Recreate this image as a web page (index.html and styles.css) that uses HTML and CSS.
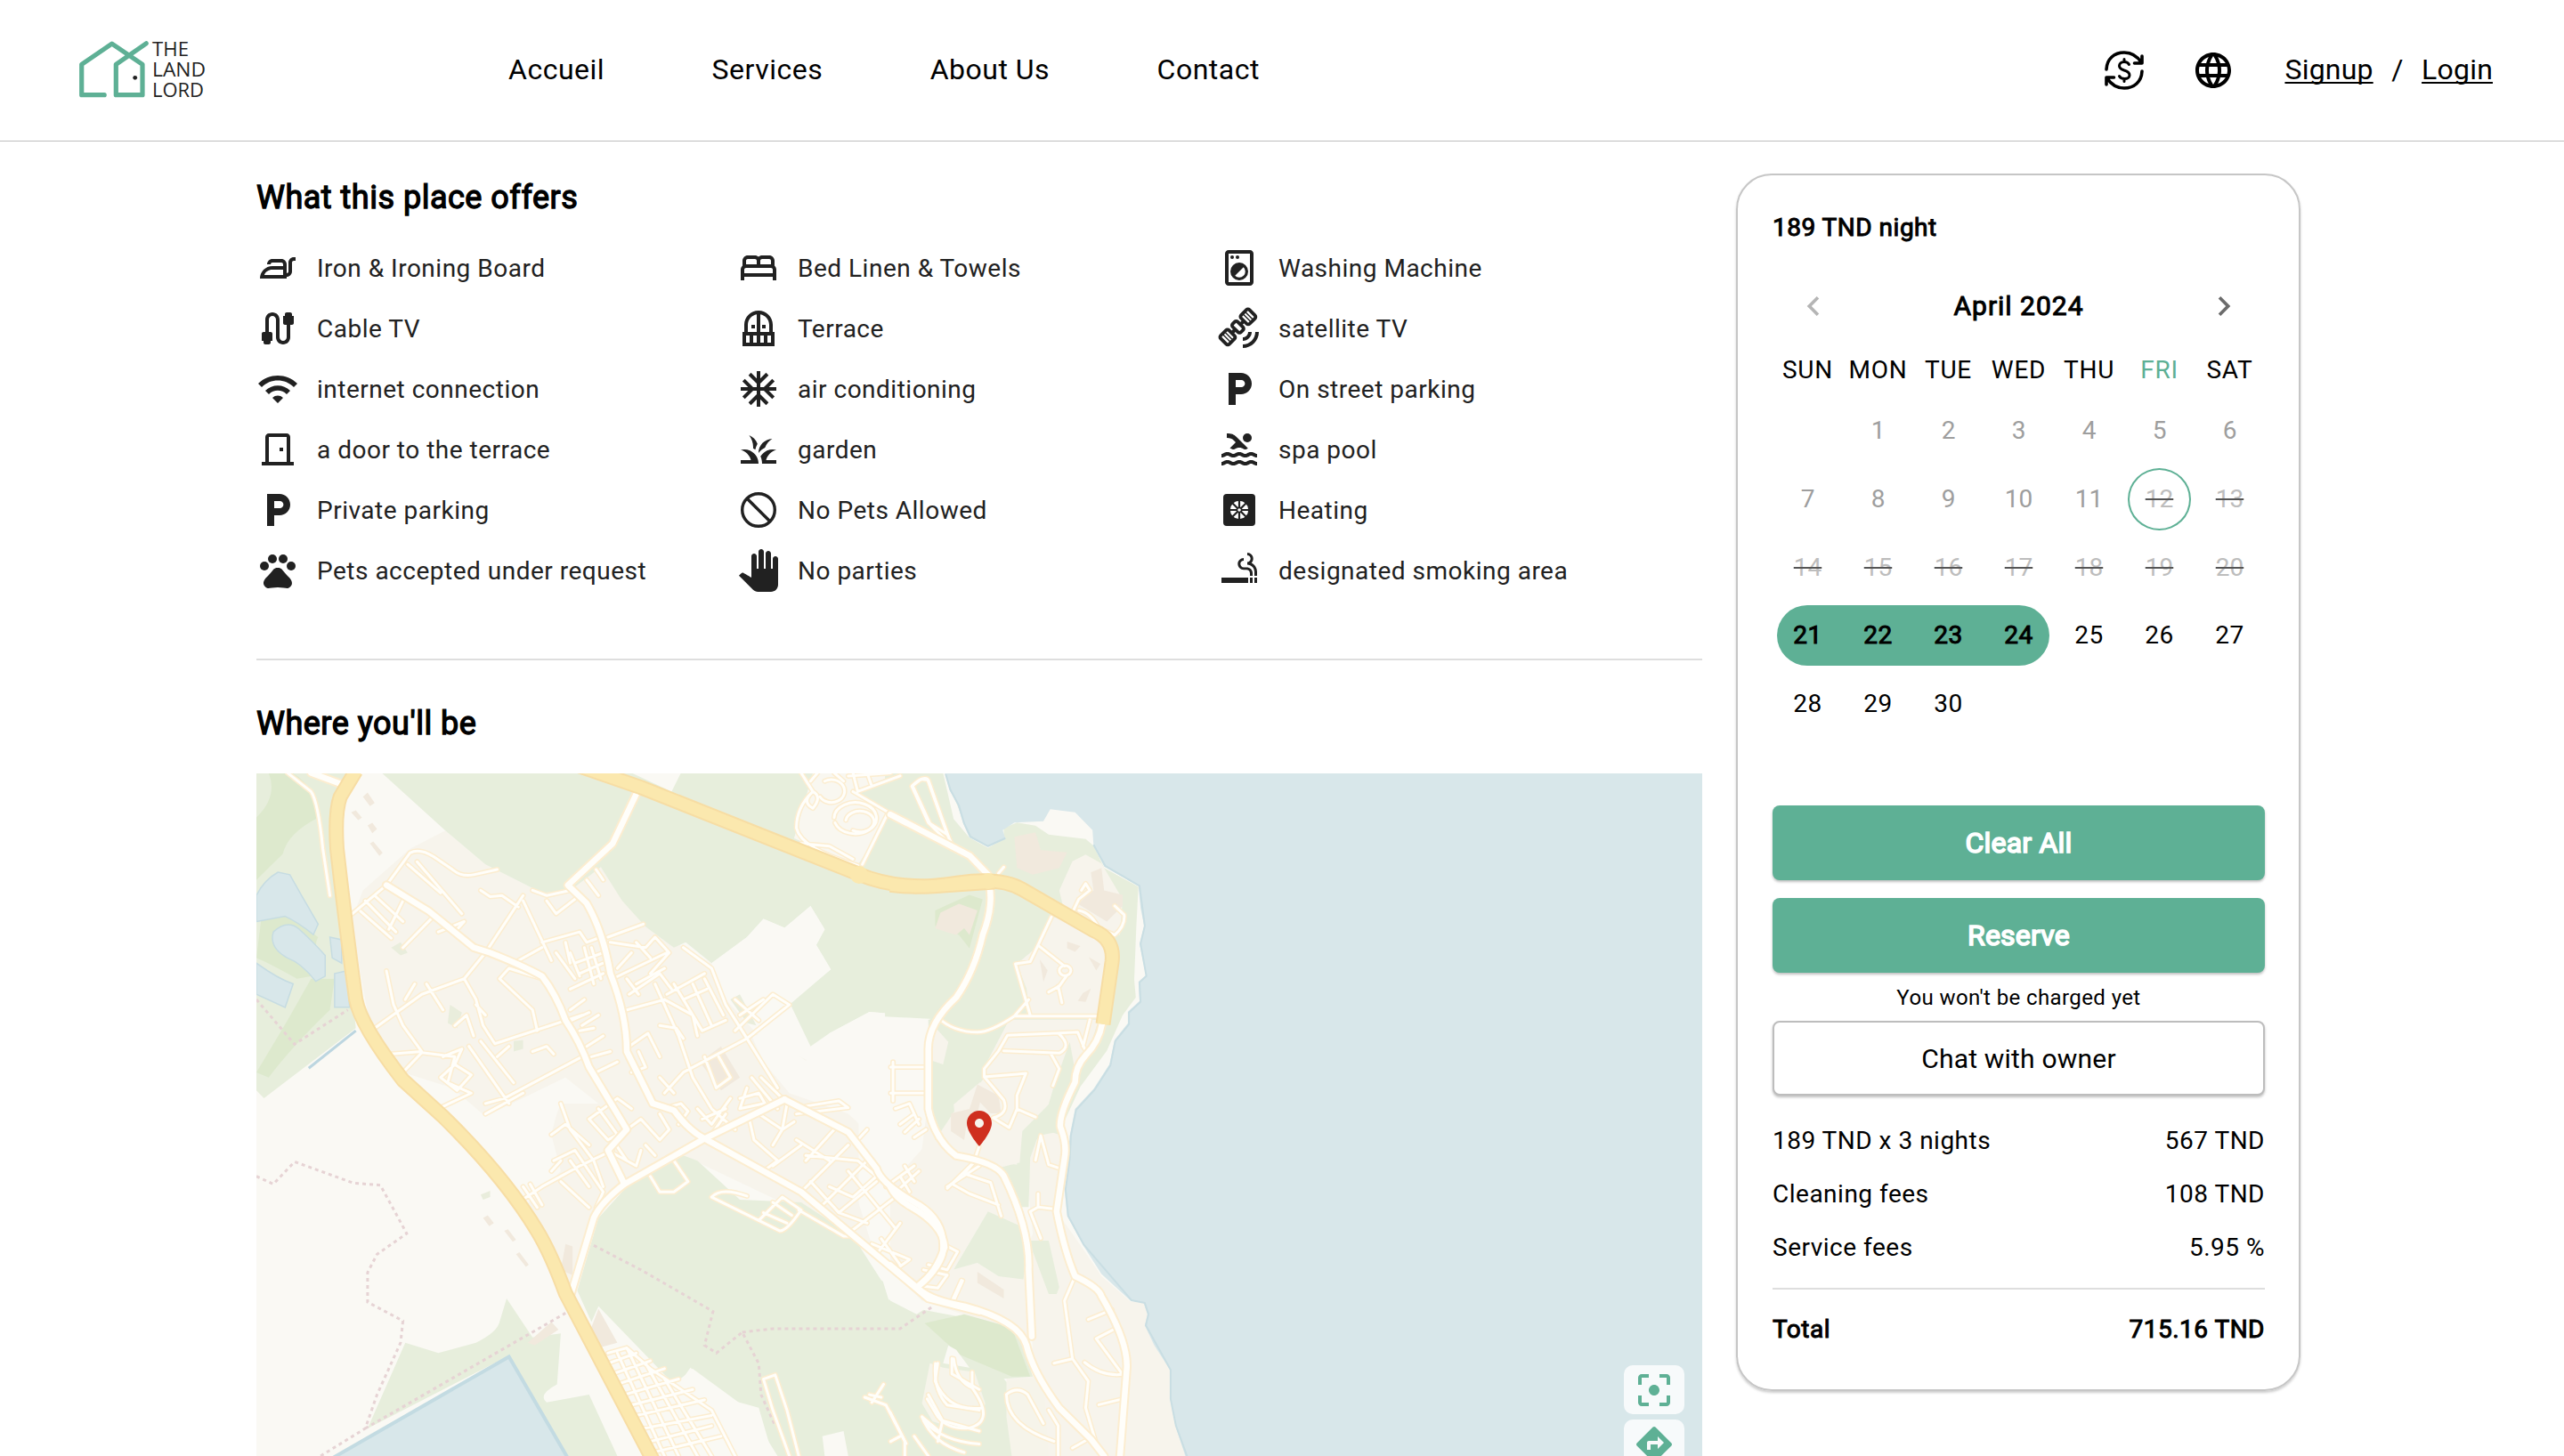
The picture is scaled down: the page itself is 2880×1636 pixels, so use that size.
FILE: index.html
```
<!DOCTYPE html>
<html lang="en">
<head>
<meta charset="utf-8">
<title>The Land Lord</title>
<link rel="stylesheet" href="styles.css">
</head>
<body>
<header class="header">
  <svg class="logo" viewBox="0 0 150 68" width="150" height="68">
    <g fill="none" stroke="#5eb095" stroke-width="5.2" stroke-linejoin="round" stroke-linecap="round">
      <path d="M29.200 61.700H3.700V27.300L37.700 4.200L72 27.300V61.700H42.300V27.300L76.200 3.800"/>
    </g>
    <circle cx="63.700" cy="42.300" r="2.400" fill="#222"/>
    <g class="logo-text" fill="#222">
      <text x="83" y="18.400" textLength="41" lengthAdjust="spacingAndGlyphs">THE</text>
      <text x="83" y="41.400" textLength="60" lengthAdjust="spacingAndGlyphs">LAND</text>
      <text x="83" y="64.400" textLength="58" lengthAdjust="spacingAndGlyphs">LORD</text>
    </g>
  </svg>
  <nav class="nav"><a>Accueil</a><a>Services</a><a>About Us</a><a>Contact</a></nav>
  <div class="tools">
    <svg class="currency" viewBox="0 0 48 48" width="48" height="48" fill="none" stroke="#000" stroke-width="3.600" stroke-linecap="round" stroke-linejoin="round">
      <path d="M4 23C4.500 11 13 4 24 4C32 4 39 8.500 43.500 15.500M44 8V16H35.500"/>
      <path d="M44 25C43.500 37 35 44 24 44C16 44 9 39.500 4.500 32.500M4 40V32H12.500"/>
      <path d="M24 11.500V14.500M24 33.500V36.500M29.500 17.500C28.500 15.500 26.500 14.500 24 14.500C20.500 14.500 18.500 16.500 18.500 19C18.500 22 21 23 24 24C27.500 25 30 26.500 30 29.500C30 32 27.500 33.500 24.500 33.500C21.500 33.500 19.500 32.500 18.500 30.500" stroke-width="3"/>
    </svg>
    <svg class="globe" viewBox="0 0 24 24" width="48" height="48"><path d="M11.990 2C6.470 2 2 6.480 2 12s4.470 10 9.990 10C17.520 22 22 17.520 22 12S17.520 2 11.990 2zm6.930 6h-2.950c-.32-1.250-.78-2.450-1.380-3.560 1.840.63 3.370 1.910 4.330 3.560zM12 4.040c.83 1.200 1.480 2.530 1.910 3.960h-3.820c.43-1.430 1.080-2.760 1.910-3.960zM4.260 14C4.100 13.360 4 12.690 4 12s.1-1.360.26-2h3.380c-.08.66-.14 1.320-.14 2 0 .68.060 1.340.14 2H4.260zm.82 2h2.950c.32 1.250.78 2.450 1.380 3.560-1.840-.63-3.370-1.900-4.330-3.560zm2.950-8H5.080c.96-1.660 2.490-2.930 4.330-3.560C8.810 5.550 8.350 6.750 8.030 8zM12 19.960c-.83-1.200-1.480-2.530-1.910-3.960h3.820c-.43 1.430-1.080 2.760-1.910 3.960zM14.340 14H9.660c-.09-.66-.16-1.320-.16-2 0-.68.070-1.350.16-2h4.680c.09.65.16 1.320.16 2 0 .68-.07 1.340-.16 2zm.25 5.560c.6-1.110 1.060-2.310 1.380-3.560h2.950c-.96 1.650-2.490 2.930-4.330 3.560zM16.360 14c.08-.66.14-1.320.14-2 0-.68-.06-1.340-.14-2h3.380c.16.64.26 1.310.26 2s-.1 1.360-.26 2h-3.380z"/></svg>
    <div class="auth"><a class="link">Signup</a><span>/</span><a class="link">Login</a></div>
  </div>
</header>

<main class="page">
  <section class="details">
    <h2 class="title">What this place offers</h2>
    <ul class="amenities">
      <li><svg class="icon" viewBox="0 0 24 24"><path d="M21 6c-1.660 0-3 1.340-3 3v5c0 .55-.45 1-1 1v-5c0-1.660-1.340-3-3-3H9C7.340 7 6 8.340 6 10h2c0-.55.45-1 1-1h5c.55 0 1 .45 1 1v1H9c-3.870 0-7 3.130-7 7h15v-1c1.660 0 3-1.340 3-3V9c0-.55.45-1 1-1h1V6H21zM15 16H4.420C5.050 14.230 6.850 13 8.900 13H15V16z"/></svg>Iron &amp; Ironing Board</li>
      <li><svg class="icon" viewBox="0 0 24 24"><path d="M21 10.780V8c0-1.650-1.350-3-3-3h-4c-.77 0-1.470.3-2 .78-.53-.48-1.230-.78-2-.78H6C4.350 5 3 6.350 3 8v2.780c-.61.55-1 1.340-1 2.220v6h2v-2h16v2h2v-6c0-.88-.39-1.670-1-2.220zM14 7h4c.55 0 1 .45 1 1v2h-6V8c0-.55.45-1 1-1zM5 8c0-.55.45-1 1-1h4c.55 0 1 .45 1 1v2H5V8zm-1 7v-2c0-.55.45-1 1-1h14c.55 0 1 .45 1 1v2H4z"/></svg>Bed Linen &amp; Towels</li>
      <li><svg class="icon" viewBox="0 0 24 24"><path fill-rule="evenodd" d="M6 2H18C19.100 2 20 2.900 20 4V20C20 21.100 19.100 22 18 22H6C4.900 22 4 21.100 4 20V4C4 2.900 4.900 2 6 2zM6 4V20H18V4z"/><circle cx="8" cy="6" r="1"/><circle cx="11" cy="6" r="1"/><circle cx="12" cy="14" r="4.200" fill="none" stroke="#212121" stroke-width="1.600"/><path d="M9 17A4.200 4.200 0 0 1 15 11z"/></svg>Washing Machine</li>

      <li><svg class="icon" viewBox="0 0 24 24"><path d="M20 5V4c0-.55-.45-1-1-1h-2c-.55 0-1 .45-1 1v1h-1v4c0 .55.45 1 1 1h1v7c0 1.100-.9 2-2 2s-2-.9-2-2V7c0-2.210-1.790-4-4-4S5 4.790 5 7v7H4c-.55 0-1 .45-1 1v4h1v1c0 .55.45 1 1 1h2c.55 0 1-.45 1-1v-1h1v-4c0-.55-.45-1-1-1H7V7c0-1.100.9-2 2-2s2 .9 2 2v10c0 2.210 1.790 4 4 4s4-1.790 4-4v-7h1c.55 0 1-.45 1-1V5H20z"/></svg>Cable TV</li>
      <li><svg class="icon" viewBox="0 0 24 24"><path d="M10 10v2H8v-2H10zM16 12v-2h-2v2H16zM21 14v8H3v-8h1v-4c0-4.420 3.580-8 8-8s8 3.580 8 8v4H21zM7 16H5v4h2V16zM11 16H9v4h2V16zM11 4.080C8.160 4.560 6 7.030 6 10v4h5V4.080zM13 14h5v-4c0-2.970-2.160-5.440-5-5.920V14zM15 16h-2v4h2V16zM19 16h-2v4h2V16z"/></svg>Terrace</li>
      <li><svg class="icon" viewBox="0 0 24 24"><path d="M21 14h2c0 4.970-4.030 9-9 9v-2c3.870 0 7-3.130 7-7zM14 17v2c2.760 0 5-2.240 5-5h-2c0 1.660-1.340 3-3 3z"/><g transform="translate(11.200 11.200) rotate(-45)" fill="none" stroke="#212121" stroke-width="1.900"><rect x="-11.400" y="-3.400" width="6.600" height="6.800" rx="1.200"/><rect x="4.800" y="-3.400" width="6.600" height="6.800" rx="1.200"/><rect x="-2" y="-3.300" width="4" height="6.600" rx="1.200"/><path d="M-5 0H-2M2 0H5" stroke-width="2"/><path d="M-8.900 -3V3M-7.200 -3V3M7.200 -3V3M8.900 -3V3" stroke-width=".7"/></g></svg>satellite TV</li>

      <li><svg class="icon" viewBox="0 0 24 24"><path d="M1 9l2 2c4.970-4.970 13.030-4.970 18 0l2-2C16.930 2.930 7.080 2.930 1 9zm8 8l3 3 3-3c-1.650-1.660-4.340-1.660-6 0zm-4-4l2 2c2.760-2.760 7.240-2.760 10 0l2-2C15.140 9.140 8.870 9.140 5 13z"/></svg>internet connection</li>
      <li><svg class="icon" viewBox="0 0 24 24"><path d="M22 11h-4.170l3.240-3.240-1.410-1.420L15 11h-2V9l4.660-4.660-1.420-1.410L13 6.170V2h-2v4.170L7.760 2.930 6.340 4.340 11 9v2H9L4.340 6.340 2.930 7.760 6.170 11H2v2h4.170l-3.240 3.240 1.410 1.420L9 13h2v2l-4.660 4.660 1.420 1.410L11 17.830V22h2v-4.170l3.240 3.240 1.420-1.410L13 15v-2h2l4.660 4.660 1.410-1.420L17.830 13H22z"/></svg>air conditioning</li>
      <li><svg class="icon" viewBox="0 0 24 24"><path d="M13 3H6v18h4v-6h3c3.310 0 6-2.690 6-6s-2.690-6-6-6zm.2 8H10V7h3.200c1.100 0 2 .9 2 2s-.9 2-2 2z"/></svg>On street parking</li>

      <li><svg class="icon" viewBox="0 0 24 24"><path d="M19 19V5c0-1.100-.9-2-2-2H7c-1.100 0-2 .9-2 2v14H3v2h18v-2h-2zm-2 0H7V5h10v14zm-4-8h2v2h-2v-2z"/></svg>a door to the terrace</li>
      <li><svg class="icon" viewBox="0 0 24 24"><path d="M12 20H2v-2h5.750C7.020 15.190 4.810 12.990 2 12.260 2.640 12.100 3.310 12 4 12c4.420 0 8 3.580 8 8zM22 12.260C21.360 12.100 20.690 12 20 12c-2.930 0-5.480 1.580-6.880 3.930.29.66.53 1.350.67 2.070.13.65.2 1.320.2 2h8v-2h-5.750c.74-2.810 2.950-5.010 5.760-5.740zM15.640 11.020c.78-2.090 2.230-3.840 4.090-5C15.440 6.160 12 9.670 12 14v.02c.95-1.270 2.200-2.300 3.640-3zM11.420 8.850C10.580 6.660 8.880 4.890 6.700 4 8.140 5.860 9 8.180 9 10.710c0 .21-.03.41-.04.61.43.24.83.52 1.220.82.21-1.180.65-2.290 1.240-3.290z"/></svg>garden</li>
      <li><svg class="icon" viewBox="0 0 24 24"><path d="M22 21c-1.110 0-1.730-.37-2.180-.64-.37-.22-.6-.36-1.150-.36-.56 0-.78.13-1.150.36-.46.27-1.070.64-2.180.64s-1.730-.37-2.180-.64c-.37-.22-.6-.36-1.150-.36-.56 0-.78.13-1.150.36-.46.27-1.080.64-2.190.64-1.110 0-1.730-.37-2.180-.64-.37-.23-.6-.36-1.150-.36s-.78.13-1.150.36c-.46.27-1.080.64-2.190.64v-2c.56 0 .78-.13 1.150-.36.46-.27 1.080-.64 2.190-.64s1.730.37 2.180.64c.37.23.59.36 1.150.36.56 0 .78-.13 1.150-.36.46-.27 1.080-.64 2.190-.64 1.110 0 1.730.37 2.180.64.37.22.6.36 1.150.36s.78-.13 1.150-.36c.45-.27 1.070-.64 2.180-.64s1.730.37 2.180.64c.37.23.59.36 1.150.36v2zm0-4.500c-1.110 0-1.730-.37-2.180-.64-.37-.22-.6-.36-1.150-.36-.56 0-.78.13-1.150.36-.45.27-1.070.64-2.180.64s-1.730-.37-2.180-.64c-.37-.22-.6-.36-1.150-.36-.56 0-.78.13-1.150.36-.45.27-1.070.64-2.180.64s-1.730-.37-2.180-.64c-.37-.22-.6-.36-1.150-.36s-.78.13-1.150.36c-.47.27-1.090.64-2.200.64v-2c.56 0 .78-.13 1.150-.36.45-.27 1.070-.64 2.180-.64s1.730.37 2.180.64c.37.22.6.36 1.150.36.56 0 .78-.13 1.150-.36.45-.27 1.070-.64 2.180-.64s1.730.37 2.180.64c.37.22.6.36 1.150.36s.78-.13 1.150-.36c.45-.27 1.070-.64 2.180-.64s1.730.37 2.180.64c.37.22.6.36 1.150.36v2zM8.670 12c.56 0 .78-.13 1.150-.36.46-.27 1.080-.64 2.190-.64 1.110 0 1.730.37 2.180.64.37.22.6.36 1.150.36s.78-.13 1.150-.36c.12-.07.26-.15.41-.23L10.480 5C8.930 3.450 7.500 2.990 5 3v2.500c1.820-.01 2.890.39 4 1.500l1 1-3.250 3.250c.31.12.56.27.77.39.37.23.59.36 1.150.36z"/><circle cx="16.500" cy="5.500" r="2.500"/></svg>spa pool</li>

      <li><svg class="icon" viewBox="0 0 24 24"><path d="M13 3H6v18h4v-6h3c3.310 0 6-2.690 6-6s-2.690-6-6-6zm.2 8H10V7h3.200c1.100 0 2 .9 2 2s-.9 2-2 2z"/></svg>Private parking</li>
      <li><svg class="icon" viewBox="0 0 24 24"><g fill="none" stroke="#212121" stroke-width="1.700"><circle cx="12" cy="12" r="9.150"/><path d="M5.600 5.600L18.400 18.400"/></g></svg>No Pets Allowed</li>
      <li><svg class="icon" viewBox="0 0 24 24"><rect x="3" y="3" width="18" height="18" rx="2"/><circle cx="12" cy="12" r="5.100" fill="#fff"/><path d="M12 6.500V17.500M6.500 12H17.500M8 8L16 16M16 8L8 16" stroke="#212121" stroke-width="1.100"/><circle cx="12" cy="12" r="1.700"/><circle cx="12" cy="12" r=".9" fill="#fff"/></svg>Heating</li>

      <li><svg class="icon" viewBox="0 0 24 24"><circle cx="4.500" cy="9.500" r="2.500"/><circle cx="9" cy="5.500" r="2.500"/><circle cx="15" cy="5.500" r="2.500"/><circle cx="19.500" cy="9.500" r="2.500"/><path d="M17.340 14.860c-.87-1.020-1.600-1.890-2.480-2.910-.46-.54-1.050-1.080-1.750-1.320-.11-.04-.22-.07-.33-.09-.25-.04-.52-.04-.78-.04s-.53 0-.79.05c-.11.02-.22.05-.33.09-.7.24-1.280.78-1.750 1.320-.87 1.020-1.600 1.890-2.480 2.910-1.310 1.310-2.920 2.760-2.620 4.790.29 1.020 1.020 2.030 2.330 2.320.73.15 3.060-.44 5.540-.44h.18c2.480 0 4.810.58 5.540.44 1.310-.29 2.040-1.310 2.330-2.320.31-2.040-1.300-3.490-2.610-4.800z"/></svg>Pets accepted under request</li>
      <li><svg class="icon" viewBox="0 0 24 24"><path d="M23 5.500V20c0 2.200-1.800 4-4 4h-7.300c-1.080 0-2.100-.43-2.850-1.190L1 14.830s1.260-1.230 1.300-1.250c.22-.19.49-.29.79-.29.22 0 .42.060.6.160.04.010 4.310 2.460 4.310 2.460V4c0-.83.67-1.500 1.500-1.500S11 3.170 11 4v7h1V1.500c0-.83.67-1.500 1.500-1.500S15 .67 15 1.500V11h1V2.500c0-.83.67-1.500 1.500-1.500s1.500.67 1.500 1.500V11h1V5.500c0-.83.67-1.500 1.500-1.500s1.500.67 1.500 1.500z"/></svg>No parties</li>
      <li><svg class="icon" viewBox="0 0 24 24"><path d="M2 16h15v3H2zm18.500 0H22v3h-1.500zM18 16h1.500v3H18zm.85-8.270c.62-.61 1-1.450 1-2.380C19.850 3.500 18.350 2 16.500 2v1.500c1.020 0 1.850.83 1.850 1.850S17.520 7.200 16.500 7.200v1.500c2.240 0 4 1.830 4 4.070V15H22v-2.240c0-2.220-1.280-4.140-3.150-5.030zm-2.820 2.470H14.500c-1.020 0-1.850-.98-1.850-2s.83-1.750 1.850-1.750v-1.500c-1.850 0-3.350 1.500-3.350 3.350s1.500 3.350 3.350 3.350h1.530c1.050 0 1.970.74 1.970 2.050V15h1.500v-1.640c0-1.810-1.460-3.160-3.470-3.160z"/></svg>designated smoking area</li>
    </ul>
    <hr class="rule">
    <h2 class="title">Where you'll be</h2>
    <div class="map">
      <svg class="map-art" viewBox="0 0 1624 767" width="1624" height="767">
        <defs>
          <g id="lanes-west">
            <path d="M235 527L310 470L360 408Q380 398 410 415L450 440Q470 455 495 450L545 440M375 425L470 525M355 430L425 485M265 500L330 560M255 520L320 572M285 490L345 540M345 590L410 530M315 555L345 500M420 560L475 540L460 555M510 480L530 492L555 490L590 512M600 490L520 600L475 650L500 690L515 740L540 775M475 650L385 680L285 745M310 635L325 700L345 740L385 790L315 795M345 830L385 792L455 800L440 850L490 870L420 900M395 660L430 710M370 660L350 690M430 800L470 785L455 815M455 740L480 720L495 760M500 700L520 720M425 840L455 815L490 835L460 865ZM485 780L570 890M510 770L580 850M540 775L725 720M520 890L560 880L725 800M520 910L600 870M545 800L570 780M620 790L650 780L665 795M550 650L620 710L630 750M550 650L570 630L640 650M600 500L660 615M620 480L650 490L700 480M650 500L670 525L720 490M640 580L720 560L735 580L765 570M580 620L640 590M670 600L710 650M690 580L700 620M700 670L770 640M710 620L770 600M730 590L750 660M745 590L765 650M720 640L770 620M700 600L720 645M735 460L760 490M755 440L770 460M780 570L855 545M785 580L860 590L880 570L910 600L870 640M840 580L870 610M790 650L905 600M800 630L830 600M820 650L845 680M825 680L890 640L915 670M840 660L900 630M905 680L985 640M900 690L960 720L970 760M880 660L930 760L960 840L1000 900L1050 940M920 660L980 750L1030 730M940 590L1000 630L1030 700L1075 765L1140 860M960 660L1000 740M985 650L1025 720M940 690L990 670M820 710L900 690M825 780L865 755L890 800M890 740L925 745L940 765M830 830L860 820L845 790M900 870L940 830L1075 765L1165 700L1130 680L1050 750M1050 690L1100 730M1060 720L1110 690M985 800L1010 860L1040 840L1015 800M890 840L920 870M735 780L770 760M725 740L760 720M745 800L785 790M755 830L800 810M700 710L730 690M690 735L740 715M720 750L750 745M1075 860L1060 900L1110 890M1085 840L1140 900M1105 840L1150 880M1060 880L1100 870L1120 900M980 920L1030 900M1000 950L1030 910M970 900L1000 930L1040 880"/>
            <path d="M680 890L700 940L750 1000L770 1050M660 950L690 930L740 970M740 920L780 960L820 940M740 920L800 880L830 900M760 900L800 950M665 1000L710 980L770 1060L755 1090M590 1080L640 1050L720 1010L790 980M600 1050L630 1090M615 1045L640 1085M680 1040L740 1090M700 1000L740 1050M660 1020L680 1000M780 980L840 1010L850 980M790 960L820 1000M820 940L850 920L890 960L910 940L890 910M860 970L880 990M870 1030L890 1060L920 1060L950 1040L920 1000M915 895L935 890L950 905L930 930M1080 920L1090 960L1140 1000L1110 1020M1100 910L1150 940L1130 970M1160 890L1150 940L1175 925M1180 910L1290 898L1270 885L1200 895M1200 1000L1260 940M1190 970L1130 1010M1200 990L1310 1000L1350 1030M1190 1060L1290 970M1230 1090L1330 1000M1250 1050L1300 1070L1350 1030M1210 1040L1270 1100L1330 1120M1290 1020L1390 1130M1270 1100L1350 1040M1290 1140L1390 1070M1180 960L1250 1000M1370 1050L1430 1010M1385 1065L1440 1020M1400 1030L1420 1060M1410 1010L1430 1040M1350 1180L1400 1120M1340 1160L1420 1190L1390 1210M1360 1150L1400 1200M1490 1160L1522 1175L1500 1210L1460 1200M1450 1210L1500 1220L1480 1245L1440 1240M1510 1270L1530 1230M1380 820H1460M1380 870H1450M1385 810V885M1390 900L1420 890L1440 930M1400 930L1430 910M1410 945L1440 920M1430 955L1455 940M1310 960L1330 940M1000 1070Q1020 1050 1075 1068M1000 1070L1145 1135Q1160 1135 1190 1095L1150 1070L1100 1115M1110 1100L1160 1120M1130 1080L1170 1105M1185 1095L1280 1145H1300M1500 1050L1568 1010"/>
            <path d="M780 1370L820 1360L870 1400L1000 1480L1050 1568M780 1390L840 1370M790 1410L870 1385M800 1430L900 1400M815 1450L930 1420M830 1470L960 1440M840 1490L985 1460M855 1515L1000 1490M870 1540L1000 1510M880 1560L1020 1530M800 1370L900 1568M820 1360L930 1568M860 1390L970 1568M900 1420L1000 1568M1110 1420L1135 1412L1160 1480L1185 1568M1110 1420L1130 1480L1165 1568M1325 1455L1370 1470L1410 1540V1568M1340 1465L1365 1430M1335 1450L1360 1455M1380 1540L1400 1530M1510 1380V1410L1568 1440M1475 1390Q1470 1440 1500 1470L1568 1480M1460 1450L1490 1500L1480 1540M1450 1500Q1490 1540 1568 1545M1430 1530L1460 1568M1490 1500L1568 1520"/>
            <path d="M100 254L150 290Q165 310 175 400L190 490M1190 254L1215 290Q1180 320 1180 360Q1190 400 1310 432M1215 290Q1190 310 1215 322Q1235 300 1215 290M1240 270A28 22 0 1 1 1230 300M1300 254L1310 290L1400 260M1330 254L1340 280M1290 260L1380 254M1280 270L1260 254M1260 340A45 30 0 1 1 1262 350M1285 345A30 20 0 1 1 1300 365M1300 290L1375 330L1320 430M1375 330L1510 400M1210 270L1225 254M1190 390L1250 395L1300 420M1425 280L1445 266L1460 268L1510 395L1460 350L1425 280"/>
          </g>
          <g id="lanes-east">
            <path d="M42 65Q60 45 70 50L108 175L75 150L42 65M0 130L120 205M118 200L108 175M205 262L215 248M305 360L265 460L237 465L265 580M282 425L330 470M300 528L320 515L335 490M318 515L325 552M90 585Q120 618 165 618Q190 618 235 582L262 545M235 582H390M378 590L365 650M345 350L357 320L378 300L370 285L362 300M357 345Q380 350 395 385L425 400Q445 380 443 355L425 335M205 660L222 625L320 620L355 618L368 655M320 622Q345 650 320 665L215 660M205 660L178 700V718L215 770Q225 800 195 810L225 832L240 790L275 808M178 718L240 712L257 710L240 760V790M305 668L320 700L308 738M168 875L158 910L108 968M158 910L140 935L190 955L210 1030M120 960L150 980L205 1005M275 905L285 850L300 915L325 925M280 980V1010L265 1020L285 1080M280 1010L315 1015M350 1165L330 1220L345 1350L375 1400L370 1460L390 1540M345 1350L310 1360M420 1240L375 1262M430 1280L390 1305L440 1385M440 1385Q400 1390 368 1358M440 1440L395 1453M120 1220L137 1175M220 1430Q240 1410 260 1430L290 1495M220 1430Q220 1500 310 1535M300 1465L318 1500V1568M375 1530L345 1550M90 1360L85 1400Q110 1470 175 1460M120 1350Q125 1400 155 1415V1380M155 1415Q200 1490 150 1505Q110 1510 90 1480L70 1440M60 1480Q80 1540 140 1560M90 1510L60 1480M0 1470L30 1540M330 480m-10 0a11 11 0 1 0 22 0a11 11 0 1 0 -22 0"/>
          </g>
          <g id="streets-west">
            <path d="M840 295L790 390L695 470L735 505Q770 560 785 640Q820 720 820 790L875 890L920 903Q950 940 980 955L1190 1060L1460 1265L1568 1290"/>
            <path d="M310 470L400 520L495 590L530 600Q600 625 640 645Q670 680 690 730Q720 770 740 820L820 940L780 980L815 1045"/>
            <path d="M1155 882L980 960L815 1045Q765 1080 750 1110L702 1255"/>
            <path d="M1155 882L1290 945L1350 1015Q1360 1045 1440 1085Q1500 1120 1490 1180Q1480 1210 1440 1240"/>
            <path d="M150 254L215 276"/>
          </g>
          <g id="streets-east">
            <path d="M188 290Q195 340 175 400Q160 480 125 540Q70 600 72 660V790Q85 860 125 895Q200 910 215 940Q265 1060 262 1150L268 1300"/>
            <path d="M0 965Q10 990 40 1010Q100 1050 103 1100Q85 1160 55 1185M0 1140L55 1195Q80 1220 140 1232Q245 1265 258 1320Q270 1380 320 1460L380 1530L405 1568"/>
            <path d="M401 600Q395 640 370 670Q350 695 350 730Q320 800 322 830Q335 870 330 900L315 1020Q330 1110 350 1165Q395 1190 400 1210Q450 1310 448 1370L435 1568"/>
            <path d="M0 130L150 222L185 265"/>
          </g>
          <g id="highway-west"><path d="M245 250L212 300Q200 330 205 400Q225 560 245 690Q255 740 345 845L430 915Q560 1030 630 1135Q660 1180 690 1255L875 1575M700 235L850 282L1310 448Q1380 475 1470 472L1600 464"/></g>
          <g id="highway-east"><path d="M0 288Q60 297 130 283Q210 270 250 298L385 390Q425 410 420 460L403 600"/></g>
        </defs>
        <rect width="1624" height="767" fill="#faf9f4"/>
        <g transform="matrix(.5293 0 0 .5842 -18 -149)">
          <path fill="#f7f4ec" d="M235 540L260 480L360 400L435 365L520 430L640 485L765 435L860 550L1000 620L1030 690L1100 760L1210 810L1165 870L1290 900L1350 980L1430 960L1470 900L1568 1000V1290L1460 1285L1300 1145L940 990L820 1045L760 1100L700 1250L600 1090L680 1020L660 950L690 840L520 915L450 860L345 830L275 740Z"/>
          <path fill="#e7eedc" d="M300 254L435 365L520 430L640 485L700 480L765 435L810 500L860 550L920 590L945 580L1000 620L1075 570L1110 535L1155 552L1210 510L1240 555L1222 585L1253 632L1165 695L1210 780L1250 755L1335 714L1480 725L1590 700V254H935L915 290L830 254Z"/>
          <path fill="#f9f7f0" d="M1215 254L1175 380L1310 432L1385 330L1300 290L1400 254Z"/>
          <path fill="#e7eedc" d="M34 254H230L195 350L220 500L245 745L50 880L34 865Z"/>
          <path fill="#dde9cd" d="M34 340Q80 300 60 254H110Q160 280 165 340Q100 370 90 410L34 460ZM45 530Q90 520 120 540L165 570Q150 590 180 640L120 650Q60 620 34 610ZM34 830L100 730L150 650H200L190 710Q110 780 60 840Z"/>
          <g fill="#d8e7ea" stroke="#c6dce2" stroke-width="1.500">
            <path d="M34 490Q50 460 80 445L105 450L130 490L165 545L155 565Q120 540 95 530L34 540ZM70 560Q100 535 125 555Q150 575 180 605V645L160 655Q130 620 100 610Q60 590 70 560ZM190 570L215 575V620L195 610ZM34 620Q80 650 112 660L95 705L34 680ZM200 640L225 635L232 705H200Z"/>
          </g>
          <path d="M145 822L245 750" stroke="#bcd6e0" stroke-width="3"/>
          <path fill="#e7eedc" d="M825 1045L940 990L970 1000L1060 1075L1190 1080L1300 1145L1360 1230L1460 1285L1600 1300V1568H1290L1280 1520L1235 1530L1240 1568H1140L1080 1480L960 1400L920 1430L760 1280L745 1310L715 1250L760 1110Z"/>
          <path fill="#e7eedc" d="M1480 720H1600V900L1480 860Z"/>
          <path fill="#e7eedc" d="M565 1265L620 1340L680 1332L672 1430Q630 1450 650 1465L740 1450L800 1568H690L570 1375L270 1515L350 1350L420 1370L500 1350Q545 1330 550 1310Z"/>
          <path fill="#d8e7ea" stroke="#c3dbe2" stroke-width="4" d="M180 1580L570 1377L700 1580Z"/>
          <path fill="#faf9f4" d="M1000 620L1075 570L1110 535L1155 552L1210 510L1240 555L1222 585L1253 632L1165 700L1120 670L1030 670ZM520 915L690 840L760 890L680 890L650 960L665 1000L600 1040ZM1085 760L1120 755L1200 808L1250 755L1335 714L1480 725L1450 800L1370 820L1360 860L1430 960L1400 1000L1290 910L1165 870L1110 810ZM930 1430L955 1398L1040 1460L1100 1475L1130 1568H1060L1000 1470Z"/>
          <g fill="#f1e9dd"><path d="M975 810L1020 780L1060 840L1020 865ZM610 1350L660 1310L675 1325L625 1355ZM1500 910L1540 890V950L1510 960ZM260 300L270 292L285 312L275 318ZM235 330L245 326L258 340L250 345ZM270 355L280 350L290 362L280 370ZM275 390L282 386L302 408L295 414ZM515 1110L525 1105L538 1120L528 1126ZM560 1135L568 1132L585 1152L578 1156ZM585 1180L592 1176L612 1200L606 1204ZM690 1160L705 1165V1220L680 1210ZM760 1285L800 1350L760 1360L745 1320Z"/></g>
          <path fill="#e9eddc" d="M445 700L470 715L460 745L440 735ZM580 770L600 768V785L580 790ZM340 580L355 600L340 605L320 590ZM1040 690L1060 680L1095 740L1075 735ZM510 1065L530 1058V1070L515 1075Z"/>
        </g>
        <g transform="matrix(.5931 0 0 .5013 712 -19)">
          <path fill="#faf9f4" d="M0 37H103L150 180L215 185L235 148L303 118L350 125L383 165L405 245L470 290L484 490L450 572L415 690L340 850L330 970L365 1095L455 1220H480L530 1375L560 1568H0V1230L-60 1000V590H0Z"/>
          <path fill="#e7eedc" d="M-10 37H100L120 140L150 182L185 205L215 185V160L240 148L275 155L300 175L370 185L385 200L405 250L470 292L466 380L462 500L465 540L440 580L410 660L360 740L325 830L300 900L75 620V588L-10 583Z"/>
          <path fill="#f7f4ec" d="M305 360L350 365L425 405L400 585L265 582L258 520L240 465L275 430ZM320 300L345 235L370 220L400 240L440 320L435 400L400 385L330 350ZM225 590H395L378 650L345 700L318 705L300 780L255 850L245 910L215 920L240 990L262 1080L265 1110L185 1020L120 1150L165 1135L205 1165H265V1300L60 1220L0 1150V960L60 880L75 740L110 770L175 720L185 680ZM300 840L325 850L330 900L315 1020L360 1095L400 1165L455 1222H480L530 1375L560 1568H220V1395L270 1390L268 1200L262 1090L270 1070L258 930L275 860Z"/>
          <path fill="#e7eedc" d="M72 590H225L180 690L175 725L150 760L130 780L85 860L75 790ZM340 640L350 705L318 800L325 840L280 850L265 900L262 1010L240 1010L212 920L245 910L250 840L300 780L320 705ZM185 1020L245 1052L262 1100L252 1172L205 1165L165 1135L120 1150ZM265 1085H300L320 1190L315 1205H300L270 1110ZM-10 1215L60 1240L240 1280L270 1390L215 1395L240 1430V1568H-10Z"/>
          <path fill="#f7f4ec" d="M120 780L170 730L215 790L240 830V915L180 905L130 890ZM80 600L110 640L100 690L75 680Z"/>
          <path fill="#dde9cd" d="M65 1270L140 1250L230 1280L265 1390H230L130 1340ZM85 345L150 310L175 320L150 430L130 400L85 380Z"/>
          <path fill="#faf9f4" d="M110 1320L125 1330L150 1370L100 1360ZM0 1180L30 1190L70 1235L50 1250L0 1220Z"/>
          <path fill="#f6f4ea" d="M75 1360L100 1370L160 1380L180 1450L165 1500L130 1510L80 1490L60 1450ZM220 1400L290 1395L300 1568H230L220 1480Z"/>
          <path fill="#f1e9dd" d="M235 180L275 170L285 210L335 215L320 250L270 265L240 250ZM95 350L130 330L165 345L150 400L140 385L125 400L110 395L85 385ZM165 735L205 760L210 800L190 800L170 775L165 800L145 820L140 860L115 840L115 800L150 790ZM380 260L400 250L405 300L440 310V335L410 370L355 330L385 300ZM335 415L360 425L350 438L335 430ZM376 450L398 465L390 480ZM283 455L298 480L290 505ZM165 1155L215 1195V1215L165 1180ZM380 520L370 550L355 548L365 530Z"/>
          <path fill="#d8e7ea" d="M103 37L112 75L128 110L138 150L150 182L185 202L218 185L213 165L235 148L290 145L303 118L350 125L383 165L385 200L405 247L470 290L474 340L481 380L472 420L484 490L470 505L472 548L450 572V598L425 635L415 690L385 745L350 790L340 850L338 900L330 970L335 1030L365 1095L400 1160L455 1220L480 1225L487 1250L482 1275L500 1320L530 1375V1440L540 1500L562 1580H1560V30Z"/>
          <path fill="none" stroke="#c9dee3" stroke-width="2" stroke-linejoin="round" d="M105 40L114 75L130 110L140 150L152 180L185 201L218 183M385 198L407 245L472 290L482 380L474 420L485 492L472 506L474 550L452 574V600L426 638L417 692L387 747L352 792L342 850L340 900L332 970L337 1030L367 1095L457 1219L482 1225L489 1250L484 1275L531 1375V1440L541 1500L562 1568"/>
        </g>
        <g fill="none" stroke="#e6d3d4" stroke-width="3" stroke-dasharray="4 4">
          <g transform="matrix(.5293 0 0 .5842 -18 -149)">
            <path d="M34 1030L70 1045L115 1002L240 1043L297 1047L353 1140L290 1180L270 1215V1272L345 1308L340 1350L290 1450L265 1515L170 1568M265 1515L690 1293M34 690L115 776L228 710M750 1163L850 1210L1003 1290L985 1355L1010 1370L1065 1330L1100 1390L1105 1450L1135 1510M1065 1330L1130 1323H1400L1470 1280"/>
          </g>
        </g>
        <g class="casing" stroke-width="6">
          <use href="#lanes-west" transform="matrix(.5293 0 0 .5842 -18 -149)"/>
          <use href="#lanes-east" transform="matrix(.5931 0 0 .5013 712 -19)"/>
        </g>
        <g class="lane" stroke-width="3">
          <use href="#lanes-west" transform="matrix(.5293 0 0 .5842 -18 -149)"/>
          <use href="#lanes-east" transform="matrix(.5931 0 0 .5013 712 -19)"/>
        </g>
        <g class="casing" stroke-width="10.500">
          <use href="#streets-west" transform="matrix(.5293 0 0 .5842 -18 -149)"/>
          <use href="#streets-east" transform="matrix(.5931 0 0 .5013 712 -19)"/>
        </g>
        <g class="lane" stroke-width="6.500">
          <use href="#streets-west" transform="matrix(.5293 0 0 .5842 -18 -149)"/>
          <use href="#streets-east" transform="matrix(.5931 0 0 .5013 712 -19)"/>
        </g>
        <g class="highway-edge" stroke-width="17">
          <use href="#highway-west" transform="matrix(.5293 0 0 .5842 -18 -149)"/>
          <use href="#highway-east" transform="matrix(.5931 0 0 .5013 712 -19)"/>
        </g>
        <g class="highway" stroke-width="13">
          <use href="#highway-west" transform="matrix(.5293 0 0 .5842 -18 -149)"/>
          <use href="#highway-east" transform="matrix(.5931 0 0 .5013 712 -19)"/>
        </g>
        <circle cx="677" cy="114" r="10" fill="#fbe8ae"/>
        <circle cx="822" cy="121" r="9" fill="#fbe8ae"/>
      </svg>
      <svg class="pin" viewBox="0 0 24 24" width="48" height="48"><circle cx="12" cy="9" r="3" fill="#f7f4ec"/><path fill="#cf2f1f" d="M12 2C8.130 2 5 5.130 5 9c0 5.250 7 13 7 13s7-7.750 7-13c0-3.870-3.130-7-7-7zm0 9.500c-1.380 0-2.500-1.120-2.500-2.500s1.120-2.500 2.500-2.500 2.500 1.120 2.500 2.500-1.120 2.500-2.500 2.500z"/></svg>
      <div class="map-tools">
        <button class="map-btn"><svg viewBox="0 0 24 24" width="48" height="48" fill="#5eb095"><path d="M5 15H3v4c0 1.100.9 2 2 2h4v-2H5v-4zM5 5h4V3H5c-1.100 0-2 .9-2 2v4h2V5zm14-2h-4v2h4v4h2V5c0-1.100-.9-2-2-2zm0 16h-4v2h4c1.100 0 2-.9 2-2v-4h-2v4zM12 9c-1.660 0-3 1.340-3 3s1.340 3 3 3 3-1.340 3-3-1.340-3-3-3z"/></svg></button>
        <button class="map-btn"><svg viewBox="0 0 24 24" width="48" height="48" fill="#5eb095"><path d="M21.710 11.290l-9-9c-.39-.39-1.020-.39-1.410 0l-9 9c-.39.39-.39 1.020 0 1.410l9 9c.39.39 1.020.39 1.410 0l9-9c.39-.38.39-1.010 0-1.410zM14 14.500V12h-4v3H8v-4c0-.55.45-1 1-1h5V7.500l3.500 3.500-3.500 3.500z"/></svg></button>
      </div>
    </div>
  </section>

  <aside class="card">
    <div class="price strong">189 TND night</div>
    <div class="month">
      <svg viewBox="0 0 24 24" width="44" height="44" fill="#b5b5b5"><path d="M15.410 7.410L14 6l-6 6 6 6 1.410-1.410L10.830 12z"/></svg>
      <span class="strong">April 2024</span>
      <svg viewBox="0 0 24 24" width="44" height="44" fill="#6b6b6b"><path d="M10 6L8.590 7.410 13.170 12l-4.580 4.590L10 18l6-6z"/></svg>
    </div>
    <div class="weekdays"><span>SUN</span><span>MON</span><span>TUE</span><span>WED</span><span>THU</span><span class="current">FRI</span><span>SAT</span></div>
    <div class="days">
      <span></span><span class="past">1</span><span class="past">2</span><span class="past">3</span><span class="past">4</span><span class="past">5</span><span class="past">6</span>
      <span class="past">7</span><span class="past">8</span><span class="past">9</span><span class="past">10</span><span class="past">11</span><span class="today"><s>12</s></span><span><s>13</s></span>
      <span><s>14</s></span><span><s>15</s></span><span><s>16</s></span><span><s>17</s></span><span><s>18</s></span><span><s>19</s></span><span><s>20</s></span>
      <span class="picked first strong">21</span><span class="picked strong">22</span><span class="picked strong">23</span><span class="picked last strong">24</span><span>25</span><span>26</span><span>27</span>
      <span>28</span><span>29</span><span>30</span>
    </div>
    <button class="btn">Clear All</button>
    <button class="btn">Reserve</button>
    <p class="note">You won't be charged yet</p>
    <button class="btn outline">Chat with owner</button>
    <dl class="fees">
      <div><dt>189 TND x 3 nights</dt><dd>567 TND</dd></div>
      <div><dt>Cleaning fees</dt><dd>108 TND</dd></div>
      <div><dt>Service fees</dt><dd>5.95 %</dd></div>
    </dl>
    <div class="total strong"><span>Total</span><span>715.16 TND</span></div>
  </aside>
</main>
</body>
</html>
```
FILE: styles.css
```
* { box-sizing: border-box; }
body {
  margin: 0;
  height: 1636px;
  overflow: hidden;
  background: #fff;
  color: #000;
  font: 28px/40px Roboto, "Liberation Sans", sans-serif;
  letter-spacing: .5px;
}
button { font: inherit; letter-spacing: inherit; border: 0; padding: 0; }
h2, p, ul, dl, dd { margin: 0; padding: 0; }
.strong { -webkit-text-stroke: 1px currentColor; }

.header {
  display: flex;
  align-items: center;
  height: 159px;
  padding: 0 80px 0 88px;
  border-bottom: 1px solid #bdbdbd;
  font-size: 32px;
}
.logo { overflow: visible; }
.logo-text { font: 22px "Open Sans", "Noto Sans", sans-serif; letter-spacing: 0; }
.nav { display: flex; gap: 120.5px; margin-left: 333px; padding-bottom: 2px; }
.tools { display: flex; align-items: center; margin-left: auto; }
.globe { margin-left: 52px; }
.auth { display: flex; gap: 20.5px; margin-left: 56px; padding-bottom: 2px; letter-spacing: .2px; }
.link { text-decoration: underline; text-decoration-thickness: 2px; text-underline-offset: 3px; text-decoration-skip-ink: none; }

.page { display: flex; align-items: flex-start; gap: 38px; padding: 36px 0 0 288px; }
.details { width: 1624px; padding-top: 5px; }
.title { padding-top: 1px; font-size: 36px; line-height: 42px; font-weight: 400; -webkit-text-stroke: 1.3px currentColor; }
.amenities {
  display: grid;
  grid-template-columns: repeat(3, 540px);
  grid-auto-rows: 68px;
  margin-top: 24px;
  list-style: none;
  color: #212121;
}
.amenities li { display: flex; align-items: center; gap: 20px; padding-top: 2px; }
.icon { width: 48px; height: 48px; margin-top: -2px; fill: #212121; }
.rule { height: 2px; margin: 65px 0 49px; border: 0; background: #dedede; }

.map { position: relative; height: 767px; margin-top: 35px; overflow: hidden; }
.map-art { display: block; }
.map-art path { vector-effect: non-scaling-stroke; }
.casing, .lane, .highway, .highway-edge { fill: none; stroke-linejoin: round; }
.casing { stroke: #fcedd0; stroke-linecap: round; }
.lane { stroke: #fffefa; stroke-linecap: round; }
.highway-edge { stroke: #f7dda4; }
.highway { stroke: #fbe8ae; }
.pin { position: absolute; left: 787.6px; top: 375px; }
.map-tools { position: absolute; right: 20px; top: 665px; display: grid; gap: 6px; }
.map-btn {
  display: flex;
  align-items: center;
  justify-content: center;
  width: 68px;
  height: 55px;
  border-radius: 10px;
  background: rgba(255, 255, 255, .8);
}

.card {
  width: 634px;
  height: 1368px;
  padding: 39px 38px 38px 39px;
  border: 2px solid #c6c6c6;
  border-radius: 40px;
  box-shadow: 0 2px 3px rgba(0, 0, 0, .2);
}
.month { display: flex; align-items: center; justify-content: space-between; height: 64px; margin-top: 36px; padding: 0 24px; font-size: 30px; letter-spacing: 1px; }
.weekdays { display: grid; grid-template-columns: repeat(7, 1fr); margin-top: 20px; text-align: center; letter-spacing: .8px; }
.current { color: #5eb095; }
.days { display: grid; grid-template-columns: repeat(7, 1fr); grid-auto-rows: 76.7px; margin-top: 10px; }
.days span { display: flex; align-items: center; justify-content: center; }
.days .past { color: #9e9e9e; letter-spacing: 0; }
.days s { color: #bdbdbd; text-decoration: line-through 2px #555; letter-spacing: 0; }
.days .today { width: 71px; height: 70px; place-self: center; border: 2px solid #5eb095; border-radius: 50%; }
.days .picked { height: 68px; align-self: center; background: #5eb095; }
.days .first { margin-left: 5px; padding-right: 5px; border-radius: 34px 0 0 34px; }
.days .last { margin-right: 5px; padding-left: 5px; border-radius: 0 34px 34px 0; }
.btn {
  display: block;
  width: 100%;
  height: 84px;
  margin-top: 20px;
  border-radius: 8px;
  background: #5eb095;
  color: #fff;
  font-size: 32px;
  letter-spacing: .2px;
  -webkit-text-stroke: 1.6px currentColor;
  box-shadow: 0 2px 3px rgba(0, 0, 0, .25);
}
.days + .btn { margin-top: 76px; }
.note { height: 54px; font-size: 24px; line-height: 57px; letter-spacing: .4px; text-align: center; }
.btn.outline { margin-top: 0; padding-top: 2px; border: 2px solid #bdbdbd; background: #fff; color: #000; font-size: 30px; -webkit-text-stroke: 0; }
.fees { margin-top: 21px; padding-bottom: 15px; border-bottom: 2px solid #dedede; }
.fees div, .total { display: flex; align-items: center; justify-content: space-between; }
.fees div { height: 60px; }
.total { height: 90px; }
```
